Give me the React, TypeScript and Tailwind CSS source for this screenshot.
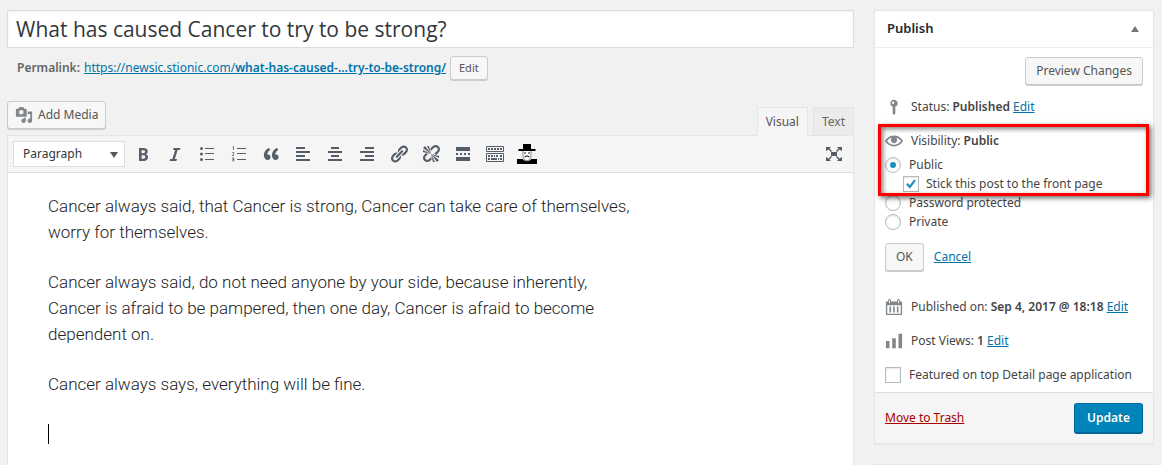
import React from "react";

type IconProps = { className?: string; size?: string; children: React.ReactNode };

function Icon({ className = "", size = "size-5", children }: IconProps) {
  return (
    <svg viewBox="0 0 20 20" aria-hidden="true" className={`${size} shrink-0 ${className}`} fill="currentColor">
      {children}
    </svg>
  );
}

const paths = {
  media:
    "M13 11V4c0-.55-.45-1-1-1h-1.67L9 1H5L3.67 3H2c-.55 0-1 .45-1 1v7c0 .55.45 1 1 1h10c.55 0 1-.45 1-1zM7 4.5c1.38 0 2.5 1.12 2.5 2.5S8.38 9.5 7 9.5 4.5 8.38 4.5 7 5.62 4.5 7 4.5zM14 6h5v10.5c0 1.38-1.12 2.5-2.5 2.5S14 17.88 14 16.5s1.12-2.5 2.5-2.5c.17 0 .34.02.5.05V9h-3V6zm-4 8.05V13h2v3.5c0 1.38-1.12 2.5-2.5 2.5S7 17.88 7 16.5 8.12 14 9.5 14c.17 0 .34.02.5.05z",
  bold:
    "M6 4v13h4.54c1.37 0 2.46-.33 3.26-1 .8-.66 1.2-1.58 1.2-2.77 0-.84-.17-1.51-.51-2.01s-.9-.85-1.67-1.03v-.09c.57-.1 1.02-.4 1.36-.9s.51-1.13.51-1.91c0-1.14-.39-1.98-1.17-2.5C12.75 4.26 11.5 4 9.78 4H6zm2.57 5.15V6.26h1.36c.73 0 1.27.11 1.61.32.34.22.51.58.51 1.07 0 .54-.16.92-.47 1.15s-.82.35-1.51.35h-1.5zm0 2.19h1.6c1.44 0 2.16.53 2.16 1.61 0 .6-.17 1.05-.51 1.34s-.86.43-1.57.43H8.57v-3.38z",
  italic: "M14.78 6h-2.13l-2.8 9h2.12l-.62 2H4.6l.62-2h2.14l2.8-9H8.03l.62-2h6.75z",
  quote:
    "M9.49 13.22c0-.74-.2-1.38-.61-1.9-.62-.78-1.83-.88-2.53-.72-.29-1.65 1.11-3.75 2.92-4.65L7.88 4c-2.73 1.3-5.42 4.28-4.96 8.05C3.21 14.43 4.59 16 6.54 16c.85 0 1.56-.25 2.12-.75s.83-1.18.83-2.03zm8.05 0c0-.74-.2-1.38-.61-1.9-.63-.78-1.83-.88-2.53-.72-.29-1.65 1.11-3.75 2.92-4.65L15.93 4c-2.73 1.3-5.41 4.28-4.95 8.05.29 2.38 1.66 3.95 3.61 3.95.85 0 1.56-.25 2.12-.75s.83-1.18.83-2.03z",
  link:
    "M17.74 2.76c1.68 1.69 1.68 4.41 0 6.1l-1.53 1.52c-1.12 1.12-2.7 1.47-4.14 1.09l2.62-2.61.76-.77.76-.76c.84-.84.84-2.2 0-3.04-.84-.85-2.2-.85-3.04 0l-.77.76-3.38 3.38c-.37-1.44-.02-3.02 1.1-4.14l1.52-1.53c1.69-1.68 4.42-1.68 6.1 0zM8.59 13.43l5.34-5.34c.42-.42.42-1.1 0-1.52-.44-.43-1.13-.39-1.53 0l-5.33 5.34c-.42.42-.42 1.1 0 1.52.44.43 1.13.39 1.52 0zm-.76 2.29l4.14-4.15c.38 1.44.03 3.02-1.09 4.14l-1.52 1.53c-1.69 1.68-4.41 1.68-6.1 0-1.68-1.68-1.68-4.42 0-6.1l1.53-1.52c1.12-1.12 2.7-1.47 4.14-1.1l-4.14 4.15c-.85.84-.85 2.2 0 3.05.84.84 2.2.84 3.04 0z",
  unlink:
    "M17.74 2.26c1.68 1.69 1.68 4.41 0 6.1l-1.53 1.52c-.32.33-.69.58-1.08.77L13 10l1.69-1.64.76-.77.76-.76c.84-.84.84-2.2 0-3.04-.84-.85-2.2-.85-3.04 0l-.77.76-.76.76L10 7l-.65-2.14c.19-.38.44-.75.77-1.07l1.52-1.53c1.69-1.68 4.42-1.68 6.1 0zM2 4l8 6-6-8zm4-2l4 8-2-8H6zM2 6l8 4-8-2V6zm7.36 7.69L10 13l.74 2.35-1.38 1.39c-1.69 1.68-4.41 1.68-6.1 0-1.68-1.68-1.68-4.42 0-6.1l1.39-1.38L7 10l-.69.64-1.52 1.53c-.85.84-.85 2.2 0 3.04.84.85 2.2.85 3.04 0zM18 16l-8-6 6 8zm-4 2l-4-8 2 8h2zm4-4l-8-4 8 2v2z",
  eye:
    "M19.7 9.4C17.7 6 14 3.9 10 3.9 6 3.9 2.3 6 .3 9.4L0 10l.3.6c2 3.4 5.7 5.5 9.7 5.5 4 0 7.7-2.1 9.7-5.5l.3-.6-.3-.6zM10 14.1c-3.1 0-6-1.6-7.7-4.1C3.6 8 5.7 6.6 8 6.1c-.9.6-1.5 1.7-1.5 2.9 0 1.9 1.6 3.5 3.5 3.5s3.5-1.6 3.5-3.5c0-1.2-.6-2.3-1.5-2.9 2.3.5 4.4 1.9 5.7 3.9-1.7 2.5-4.6 4.1-7.7 4.1z",
};

const tools: { label: string; art: React.ReactNode }[] = [
  { label: "Bold", art: <path d={paths.bold} /> },
  { label: "Italic", art: <path d={paths.italic} /> },
  {
    label: "Bulleted list",
    art: (
      <>
        <circle cx="4.5" cy="4.5" r="1.5" />
        <circle cx="4.5" cy="10" r="1.5" />
        <circle cx="4.5" cy="15.5" r="1.5" />
        <path d="M8 4h9v1H8zM8 9h9v1H8zM8 15h9v1H8z" />
      </>
    ),
  },
  {
    label: "Numbered list",
    art: (
      <>
        <path d="M8 4h9v1H8zM8 9h9v1H8zM8 15h9v1H8z" />
        <path
          d="M3.5 3.2l1-.7V6M3.2 8.5h1.6v1.3L3.4 11.5H5M3.2 14h1.6v1.4H3.6h1.2V17H3.1"
          fill="none"
          stroke="currentColor"
          strokeWidth=".8"
        />
      </>
    ),
  },
  { label: "Blockquote", art: <path d={paths.quote} /> },
  { label: "Align left", art: <path d="M3 3h9v2H3zM3 7h14v2H3zM3 11h9v2H3zM3 15h14v2H3z" /> },
  { label: "Align center", art: <path d="M6 3h8v2H6zM3 7h14v2H3zM6 11h8v2H6zM3 15h14v2H3z" /> },
  { label: "Align right", art: <path d="M8 3h9v2H8zM3 7h14v2H3zM8 11h9v2H8zM3 15h14v2H3z" /> },
  { label: "Insert link", art: <path d={paths.link} /> },
  { label: "Remove link", art: <path d={paths.unlink} /> },
  {
    label: "Insert Read More tag",
    art: <path d="M3 3h14v4H3zM3 13h14v4H3zM3 9h2v2H3zM7 9h2v2H7zM11 9h2v2h-2zM15 9h2v2h-2z" />,
  },
  {
    label: "Toolbar toggle",
    art: (
      <>
        <path d="M1.5 2.5h17v5h-17zM1.5 9.5h17v8h-17z" fill="none" stroke="currentColor" />
        <path d="M3 4h2v2H3zM6 4h2v2H6zM9 4h2v2H9zM12 4h2v2h-2zM15 4h2v2h-2zM3 11h2v2H3zM6 11h2v2H6zM9 11h1v2H9zM11 11h2v2h-2zM15 11h2v2h-2zM3 14h2v2H3zM6 14h6v2H6zM13 14h1v2h-1zM15 14h2v2h-2z" />
      </>
    ),
  },
  {
    label: "Black hat tool",
    art: (
      <>
        <path d="M6 6h8v6.5c0 2.500-1.500 4-4 4s-4-1.500-4-4z" fill="#fff" stroke="#555" strokeWidth=".7" />
        <path
          d="M6 0h8v5h4.500v2h-17V5H6zM0 20v-5h5.800c.8 1.400 2.200 2.200 4.200 2.200s3.400-.8 4.200-2.200H20v5zM7.200 8.500h1.800v1H7.200zM11 8.500h1.800v1H11zM7.200 13l1.800-1.500h2l1.800 1.500-.4.600-1.900-1h-1l-1.900 1z"
          fill="#000"
        />
      </>
    ),
  },
];

const buttonBase =
  "rounded-[3px] border border-[#ccc] bg-[#f7f7f7] text-[#555] shadow-[0_1px_0_#ccc] cursor-pointer flex items-center justify-center";
const linkStyle = "text-[#0073aa] underline";
const boxStyle =
  "appearance-none size-4 shrink-0 border border-[#b4b9be] bg-white shadow-[inset_0_1px_2px_rgba(0,0,0,0.1)]";
const radioStyle = `${boxStyle} rounded-full grid place-content-center before:size-[6px] before:rounded-full checked:before:bg-[#1e8cbe]`;
const grey = "text-[#82878c]";

function Tick() {
  return (
    <svg viewBox="0 0 16 16" aria-hidden="true" className="pointer-events-none absolute inset-0 size-4 opacity-0 peer-checked:opacity-100">
      <path d="M4 7.8l2.800 3.200L12 4.200" fill="none" stroke="#1e8cbe" strokeWidth="2.200" />
    </svg>
  );
}

function CheckBox({ id, defaultChecked = false }: { id: string; defaultChecked?: boolean }) {
  return (
    <span className="relative flex size-4 shrink-0">
      <input id={id} type="checkbox" defaultChecked={defaultChecked} className={`${boxStyle} peer`} />
      <Tick />
    </span>
  );
}

function Radio({ id, label, defaultChecked = false }: { id: string; label: string; defaultChecked?: boolean }) {
  return (
    <div className="flex h-[19px] items-center gap-2">
      <input id={id} type="radio" name="visibility" defaultChecked={defaultChecked} className={radioStyle} />
      <label htmlFor={id}>{label}</label>
    </div>
  );
}

function PublishBox() {
  return (
    <section className="border border-[#e5e5e5] bg-white shadow-[0_1px_1px_rgba(0,0,0,0.04)]">
      <header className="flex h-[37px] items-center justify-between border-b border-[#eee] pl-3 pr-[14px]">
        <h2 className="text-[13px] font-semibold text-[#23282d]">Publish</h2>
        <button type="button" aria-label="Toggle panel: Publish" className="text-[#72777c]">
          <svg viewBox="0 0 8 6" className="h-[6px] w-2" fill="currentColor" aria-hidden="true">
            <path d="M4 0l4 6H0z" />
          </svg>
        </button>
      </header>

      <div className="px-[10px] pt-[9px]">
        <div className="flex justify-end">
          <button type="button" className={`${buttonBase} h-7 px-[10px]`}>
            Preview Changes
          </button>
        </div>

        <div className="mt-3 flex h-5 items-center gap-2">
          <Icon className={grey} size="h-5 w-[18px]">
            <path d="M10 2a4 4 0 0 1 1.500 7.700V17l-1 1.500h-1L8.500 17V9.700A4 4 0 0 1 10 2zM9 4a1.300 1.300 0 1 0 0 2.600A1.300 1.300 0 0 0 9 4z" fillRule="evenodd" />
          </Icon>
          <p>
            Status: <b className="font-semibold">Published</b>{" "}
            <a href="#status" className={linkStyle}>Edit</a>
          </p>
        </div>

        <div className="relative mt-[14px]">
          <div className="flex h-5 items-center gap-2">
            <Icon className={grey} size="h-5 w-[18px]">
              <path d={paths.eye} />
            </Icon>
            <p>
              Visibility: <b className="font-semibold">Public</b>
            </p>
          </div>
          <div className="mt-1">
            <Radio id="visibility-public" label="Public" defaultChecked />
            <div className="ml-[18px] flex h-[19px] items-center gap-[7px]">
              <CheckBox id="sticky" defaultChecked />
              <label htmlFor="sticky">Stick this post to the front page</label>
            </div>
          </div>
          <div className="pointer-events-none absolute -bottom-[3px] -left-[7px] -right-[6px] -top-[7px] border-[3px] border-[#fe0000] shadow-[2px_2px_5px_rgba(0,0,0,0.6),inset_2px_2px_5px_rgba(0,0,0,0.5)]" />
        </div>
        <Radio id="visibility-password" label="Password protected" />
        <Radio id="visibility-private" label="Private" />

        <div className="mt-3 flex items-center gap-[10px]">
          <button type="button" className={`${buttonBase} h-7 px-[10px]`}>OK</button>
          <a href="#cancel" className={linkStyle}>Cancel</a>
        </div>

        <div className="mt-[26px] flex h-5 items-center gap-2">
          <Icon className={grey} size="h-5 w-[18px]">
            <path
              fillRule="evenodd"
              d="M1 4h2.500V2.500a1.500 1.500 0 0 1 3 0V4h7V2.500a1.500 1.500 0 0 1 3 0V4H19v15H1zM2.500 8v9.500h15V8zM4.500 2.500V5.500h1v-3zM14.500 2.500V5.500h1v-3z"
            />
            <path d="M5 9.500h1.800V16H5zM9.100 9.500h1.800V16H9.100zM13.200 9.500H15V16h-1.800z" />
          </Icon>
          <p className="whitespace-nowrap">
            Published on: <b className="font-semibold">Sep 4, 2017 @ 18:18</b>{" "}
            <a href="#timestamp" className={linkStyle}>Edit</a>
          </p>
        </div>
        <div className="mt-[14px] flex h-5 items-center gap-2">
          <Icon className={grey} size="h-5 w-[18px]">
            <path d="M1 10h4v8H1zM8 7h4v11H8zM15 2h4v16h-4z" />
          </Icon>
          <p>
            Post Views: <b className="font-semibold">1</b>{" "}
            <a href="#views" className={linkStyle}>Edit</a>
          </p>
        </div>
        <div className="mt-[14px] flex h-5 items-center gap-2">
          <CheckBox id="featured" />
          <label htmlFor="featured" className="whitespace-nowrap">Featured on top Detail page application</label>
        </div>
      </div>

      <footer className="mt-[7px] flex items-center justify-between border-t border-[#ddd] bg-[#f5f5f5] p-[10px]">
        <a href="#trash" className="text-[#a00] underline">Move to Trash</a>
        <button
          type="button"
          className="h-[30px] cursor-pointer rounded-[3px] border border-[#006799] border-t-[#0073aa] bg-[#0085ba] px-3 font-semibold text-white shadow-[0_1px_0_#006799] [text-shadow:0_-1px_1px_#006799]"
        >
          Update
        </button>
      </footer>
    </section>
  );
}

function Editor() {
  return (
    <div className="flex flex-1 flex-col">
      <div className="flex items-end justify-between">
        <button type="button" className={`${buttonBase} mb-[6px] h-7 gap-[5px] px-[7px]`}>
          <Icon className={grey} size="size-[18px]">
            <path d={paths.media} />
          </Icon>
          Add Media
        </button>
        <div role="tablist" className="flex gap-[5px]">
          <button type="button" role="tab" aria-selected="true" className="relative z-10 -mb-px h-[29px] border border-b-0 border-[#e5e5e5] bg-[#f5f5f5] px-2 text-[#555]">
            Visual
          </button>
          <button type="button" role="tab" aria-selected="false" className="h-7 border border-b-0 border-[#e5e5e5] bg-[#ebebeb] px-2 text-[#666]">
            Text
          </button>
        </div>
      </div>
      <div className="flex flex-1 flex-col border border-b-0 border-[#e5e5e5] bg-white">
        <div role="toolbar" aria-label="Formatting" className="flex h-[37px] items-center border-b border-[#ddd] bg-[#f5f5f5] px-[5px]">
          <div className="relative mr-1 flex">
            <select aria-label="Block format" className="h-[26px] w-28 appearance-none border border-[#ddd] bg-white pl-[9px] text-xs text-[#32373c]">
              <option>Paragraph</option>
            </select>
            <svg viewBox="0 0 8 6" aria-hidden="true" className="pointer-events-none absolute right-[7px] top-[11px] h-[6px] w-2">
              <path d="M0 0h8L4 6z" fill="#50575e" />
            </svg>
          </div>
          <div className="flex gap-1">
            {tools.map((tool) => (
              <button key={tool.label} type="button" aria-label={tool.label} className="flex size-7 items-center justify-center text-[#555d66]">
                <Icon>{tool.art}</Icon>
              </button>
            ))}
          </div>
          <button type="button" aria-label="Distraction-free writing" className="ml-auto flex size-7 items-center justify-center text-[#555d66]">
            <Icon>
              <path d="M7 8h6v4H7zM2 3h5L5.500 4.500 8 7 7 8 4.500 5.500 2 7zM18 3v4l-2.500-1.500L13 8l-1-1 2.500-2.500L13 3zM2 17v-4l2.500 1.500L7 12l1 1-2.500 2.500L7 17zM18 17h-5l1.500-1.500L12 13l1-1 2.500 2.500L18 13z" />
            </Icon>
          </button>
        </div>
        <div className="flex flex-1 flex-col gap-6 px-10 pt-5 font-['Roboto','Liberation_Sans',sans-serif] text-[17px] font-light leading-[26px] text-[#222]">
          <p className="max-w-[600px]">
            Cancer always said, that Cancer is strong, Cancer can take care of themselves,
            <br />
            worry for themselves.
          </p>
          <p className="max-w-[600px]">
            Cancer always said, do not need anyone by your side, because inherently,
            <br />
            Cancer is afraid to be pampered, then one day, Cancer is afraid to become
            <br />
            dependent on.
          </p>
          <p className="max-w-[600px]">Cancer always says, everything will be fine.</p>
          <div className="flex h-[26px] items-center">
            <span className="h-5 w-px bg-black" />
          </div>
        </div>
      </div>
    </div>
  );
}

export default function App() {
  return (
    <div className="flex min-h-screen gap-5 bg-[#f1f1f1] pl-[7px] pr-2 pt-[10px] font-['Noto_Sans','Open_Sans',sans-serif] text-xs text-[#444]">
      <main className="flex min-w-0 flex-1 flex-col">
        <input
          aria-label="Post title"
          defaultValue="What has caused Cancer to try to be strong?"
          className="h-[38px] w-full border border-[#ddd] bg-white px-2 font-['Open_Sans','Noto_Sans',sans-serif] text-[21px] text-[#32373c] shadow-[inset_0_1px_2px_rgba(0,0,0,0.07)]"
        />
        <div className="mb-[21px] mt-2 flex h-6 items-center gap-1 pl-[10px] text-[#666]">
          <strong className="font-semibold">Permalink:</strong>
          <a href="#permalink" className={linkStyle}>
            https://newsic.stionic.com/<b className="font-semibold">what-has-caused-…try-to-be-strong/</b>
          </a>
          <button type="button" className={`${buttonBase} h-6 px-2 text-[11px]`}>Edit</button>
        </div>
        <Editor />
      </main>
      <aside className="flex w-[280px] shrink-0 flex-col gap-5">
        <PublishBox />
        <div className="border-t border-[#e5e5e5]" />
      </aside>
    </div>
  );
}
